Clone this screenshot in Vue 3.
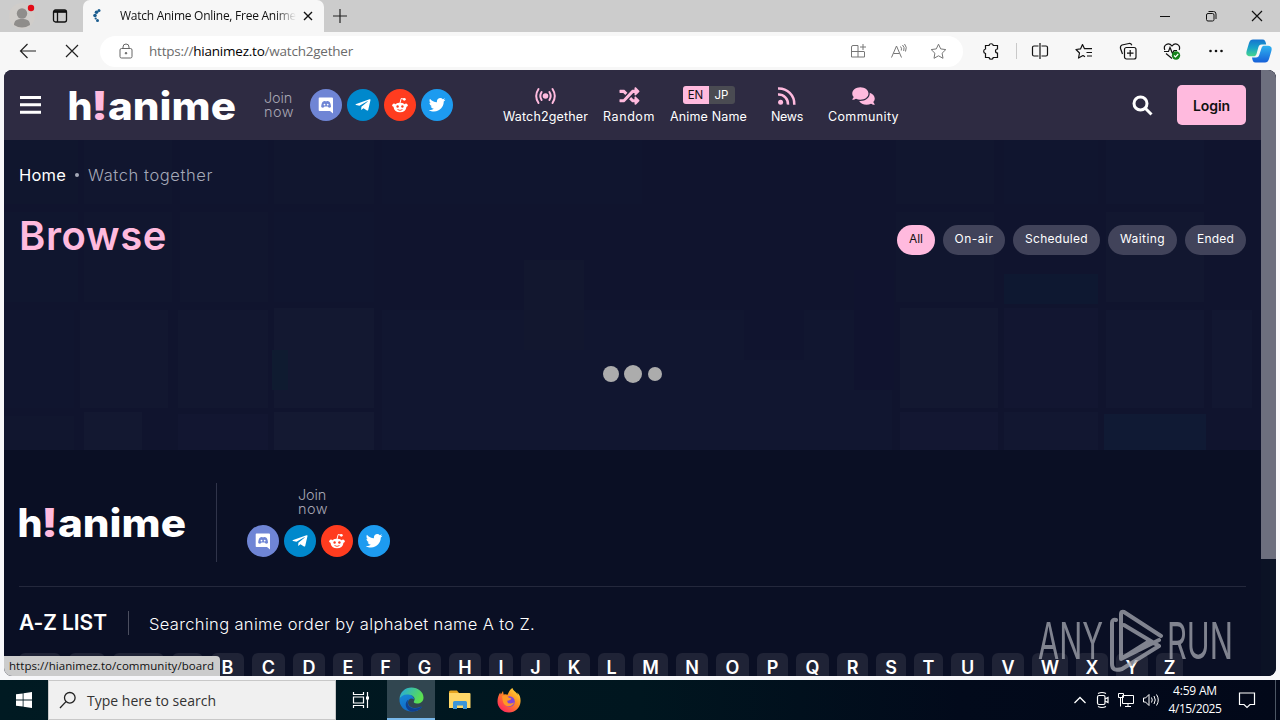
<script setup>
import { h } from 'vue'

// Spreads a label over a set width by adjusting its tracking.
const vFit = {
  mounted(el, { value }) {
    el.style.letterSpacing = '0px'
    const range = document.createRange()
    range.selectNodeContents(el)
    const natural = range.getBoundingClientRect().width
    el.style.letterSpacing = (value - natural) / el.textContent.trim().length + 'px'
  }
}

const Logo = () =>
  h('svg', { width: 168, height: 48, viewBox: '0 -6 168 48', 'font-family': 'Inter, sans-serif', 'font-weight': 800, 'font-size': 39 }, [
    h('text', { x: -1.5, y: 32, textLength: 25, lengthAdjust: 'spacingAndGlyphs', fill: '#fff' }, 'h'),
    h('text', { x: 22, y: 32, textLength: 17, lengthAdjust: 'spacingAndGlyphs', fill: '#ffbade' }, '!'),
    h('text', { x: 39, y: 32, textLength: 128, lengthAdjust: 'spacingAndGlyphs', fill: '#fff' }, 'anime')
  ])

const twitter = 'M459.37 151.716c.325 4.548.325 9.097.325 13.645 0 138.72-105.583 298.558-298.558 298.558-59.452 0-114.68-17.219-161.137-47.106 8.447.974 16.568 1.299 25.34 1.299 49.055 0 94.213-16.568 130.274-44.832-46.132-.975-84.792-31.188-98.112-72.772 6.498.974 12.995 1.624 19.818 1.624 9.421 0 18.843-1.3 27.614-3.573-48.081-9.747-84.143-51.98-84.143-102.985v-1.299c13.969 7.797 30.214 12.67 47.431 13.319-28.264-18.843-46.781-51.005-46.781-87.391 0-19.492 5.197-37.36 14.294-52.954 51.655 63.675 129.3 105.258 216.365 109.807-1.624-7.797-2.599-15.918-2.599-24.04 0-57.828 46.782-104.934 104.934-104.934 30.213 0 57.502 12.67 76.67 33.137 23.715-4.548 46.456-13.32 66.599-25.34-7.798 24.366-24.366 44.833-46.132 57.827 21.117-2.273 41.584-8.122 60.426-16.243-14.292 20.791-32.161 39.308-52.628 54.253z'
const telegram = 'M446.7 98.6l-67.6 318.8c-5.1 22.5-18.4 28.1-37.3 17.5l-103-75.9-49.7 47.8c-5.5 5.5-10.1 10.1-20.7 10.1l7.4-104.9 190.9-172.5c8.3-7.4-1.8-11.5-12.9-4.1L117.8 284 16.2 252.2c-22.1-6.9-22.5-22.1 4.6-32.7L418.2 66.4c18.4-6.9 34.5 4.1 28.5 32.2z'
const shuffle = 'M504.971 359.029c9.373 9.373 9.373 24.569 0 33.941l-80 79.984c-15.01 15.01-40.971 4.49-40.971-16.971V416h-58.785a12.004 12.004 0 0 1-8.773-3.812l-70.556-75.596 53.333-57.143L352 336h32v-39.981c0-21.438 25.943-31.998 40.971-16.971l80 79.981zM12 176h84l52.781 56.551 53.333-57.143-70.556-75.596A11.999 11.999 0 0 0 122.785 96H12c-6.627 0-12 5.373-12 12v56c0 6.627 5.373 12 12 12zm372 0v39.984c0 21.46 25.961 31.98 40.971 16.971l80-79.984c9.373-9.373 9.373-24.569 0-33.941l-80-79.981C409.943 24.021 384 34.582 384 56.019V96h-58.785a12.004 12.004 0 0 0-8.773 3.812L96 336H12c-6.627 0-12 5.373-12 12v56c0 6.627 5.373 12 12 12h110.785c3.326 0 6.503-1.381 8.773-3.812L352 176h32z'
const comments = 'M416 192c0-88.4-93.1-160-208-160S0 103.6 0 192c0 34.3 14.1 65.9 38 92-13.4 30.2-35.5 54.2-35.8 54.5-2.2 2.3-2.8 5.7-1.5 8.7S4.8 352 8 352c36.6 0 66.9-12.3 88.7-25 32.2 15.7 70.3 25 111.3 25 114.9 0 208-71.6 208-160zm122 220c23.9-26 38-57.7 38-92 0-66.9-53.5-124.2-129.3-148.1.9 6.6 1.3 13.3 1.3 20.1 0 105.9-107.7 192-240 192-10.8 0-21.3-.8-31.7-1.9C207.8 439.6 281.8 480 368 480c41 0 79.1-9.2 111.3-25 21.8 12.7 52.1 25 88.7 25 3.2 0 6.1-1.9 7.3-4.8 1.3-2.9.7-6.3-1.5-8.7-.3-.3-22.4-24.2-35.8-54.5z'

const svg32 = (color, kids) =>
  h('svg', { width: 32, height: 32, viewBox: '0 0 32 32' }, [h('circle', { cx: 16, cy: 16, r: 16, fill: color }), ...kids])

const Socials = () => [
  svg32('#6f85d5', [
    h('path', { d: 'M9.500 8.500h12.500q1 0 1 1V24.500l-3-2.500H9.500q-.8 0-.8-.8V9.500q0-1 .8-1z', fill: '#fff' }),
    h('path', { d: 'M11.200 18c0-2.700.8-4.600 1.600-5.300 1-.6 2-.8 2.500-.4h1.600c.5-.4 1.500-.2 2.500.4.8.7 1.600 2.600 1.600 5.300-.9.800-2 .9-2.400.6l-.9-1.200h-3.200l-.9 1.200c-.6.300-1.600.2-2.400-.6z', fill: '#6f85d5' }),
    h('circle', { cx: 14.500, cy: 15.600, r: 0.900, fill: '#fff' }),
    h('circle', { cx: 17.700, cy: 15.600, r: 0.900, fill: '#fff' })
  ]),
  svg32('#0088cc', [h('path', { d: telegram, fill: '#fff', transform: 'translate(8.500 8.200) scale(.0335 .0305)' })]),
  svg32('#ff3c1f', [
    h('ellipse', { cx: 16, cy: 18.500, rx: 6.300, ry: 4.800, fill: '#fff' }),
    h('circle', { cx: 10, cy: 16.200, r: 1.700, fill: '#fff' }),
    h('circle', { cx: 22, cy: 16.200, r: 1.700, fill: '#fff' }),
    h('circle', { cx: 20.300, cy: 10.300, r: 1.400, fill: '#fff' }),
    h('path', { d: 'M16 14l1.200-4.500 3 .7', stroke: '#fff', fill: 'none', 'stroke-width': 1 }),
    h('circle', { cx: 13.600, cy: 17.500, r: 1.200, fill: '#ff3c1f' }),
    h('circle', { cx: 18.400, cy: 17.500, r: 1.200, fill: '#ff3c1f' }),
    h('path', { d: 'M13.500 20.500q2.500 1.800 5 0', stroke: '#ff3c1f', fill: 'none', 'stroke-width': 0.900 })
  ]),
  svg32('#1d9bf0', [h('path', { d: twitter, fill: '#fff', transform: 'translate(7.800 7.500) scale(.0325)' })])
]

const filters = [
  { label: 'All', w: 38, t: 14, on: true },
  { label: 'On-air', w: 62, t: 39 },
  { label: 'Scheduled', w: 87, t: 63 },
  { label: 'Waiting', w: 69, t: 45 },
  { label: 'Ended', w: 61, t: 37 }
]

// Label and tile width; the first four tiles sit under the status bubble.
const letters = [
  ['', 42], ['', 36], ['', 51], ['', 31], ['B', 33], ['C', 33], ['D', 32], ['E', 30], ['F', 29], ['G', 33],
  ['H', 32], ['I', 24], ['J', 29], ['K', 32], ['L', 27], ['M', 35], ['N', 32], ['O', 33], ['P', 31], ['Q', 33],
  ['R', 31], ['S', 30], ['T', 29], ['U', 33], ['V', 32], ['W', 36], ['X', 32], ['Y', 32], ['Z', 27]
]

// Faint poster wall behind the main section: x, y, width, height, fill
const posters = [
  [0, 0, 74, 64, '#10162e'], [80, 0, 88, 64, '#11162f'], [176, 0, 88, 64, '#10152f'], [270, 0, 100, 64, '#11162f'],
  [378, 0, 260, 64, '#10152f'], [892, 0, 98, 64, '#11162f'], [1000, 0, 94, 64, '#10152f'], [1102, 0, 98, 64, '#111630'],
  [0, 72, 74, 90, '#10162f'], [80, 72, 88, 90, '#11162f'], [176, 72, 88, 90, '#11162f'], [270, 72, 100, 90, '#10152f'],
  [892, 72, 98, 90, '#11162f'], [1000, 134, 94, 30, '#0e1831'], [1102, 72, 98, 90, '#121730'],
  [0, 170, 70, 98, '#10152f'], [76, 170, 88, 98, '#121730'], [174, 170, 90, 98, '#121730'], [270, 168, 100, 100, '#131831'],
  [378, 170, 510, 140, '#111630'], [896, 168, 98, 100, '#131831'], [1000, 168, 94, 100, '#121631'], [1102, 170, 98, 98, '#121731'], [1208, 170, 40, 98, '#121731'],
  [0, 276, 70, 34, '#11162f'], [80, 272, 58, 38, '#131831'], [174, 274, 90, 36, '#121631'], [270, 272, 100, 38, '#141932'],
  [896, 272, 98, 38, '#131732'], [1000, 272, 94, 38, '#121731'], [1100, 274, 102, 36, '#101a34'],
  [268, 210, 16, 40, '#0f1b30'], [740, 170, 60, 50, '#10142f'], [850, 130, 40, 120, '#10132f'], [520, 120, 60, 90, '#12172f']
]
</script>

<template>
  <div class="screen">
    <div class="tabbar">
      <svg class="profile" width="30" height="28" viewBox="0 0 30 28"><circle cx="15" cy="14" r="13" fill="#d0cdca"/><circle cx="15" cy="11.500" r="5.200" fill="#8f8d8b"/><path d="M7 23c0-4.500 3-6 8-6s8 1.500 8 6q-8 5-16 0z" fill="#8f8d8b"/><circle cx="24" cy="6" r="3.200" fill="#e30b17"/></svg>
      <svg class="workspaces" width="16" height="16" viewBox="0 0 16 16" fill="none" stroke="#111" stroke-width="1.300"><rect x="1.500" y="2" width="13" height="12" rx="2"/><path d="M1.500 4h13M5.500 4v10" /><path d="M2 3.300h12" stroke-width="2"/></svg>
      <div class="tab">
        <svg width="12" height="18" viewBox="0 0 12 18" fill="#1b5d8f"><circle cx="7" cy="3.500" r="1.500"/><circle cx="4.500" cy="5.200" r="1.800"/><circle cx="3" cy="8.500" r="1.800"/><circle cx="5.500" cy="13.500" r="1.500"/><circle cx="3.700" cy="11.500" r="1.100"/></svg>
        <div class="tab-title"><span v-fit="176">Watch Anime Online, Free Anime</span></div>
        <svg width="10" height="10" viewBox="0 0 10 10" stroke="#111" stroke-width="1.400"><path d="M1 1l8 8M9 1l-8 8"/></svg>
      </div>
      <svg class="newtab" width="16" height="16" viewBox="0 0 16 16" stroke="#222" stroke-width="1.200"><path d="M8 1v14M1 8h14"/></svg>
      <div class="winbtns">
        <svg width="12" height="12" viewBox="0 0 12 12" stroke="#111"><path d="M1 6.500h10"/></svg>
        <svg width="12" height="12" viewBox="0 0 12 12" fill="none" stroke="#111"><rect x="1.500" y="3.500" width="7.500" height="7.500" rx="1.500"/><path d="M3.500 1.500h5a2.500 2.500 0 0 1 2.500 2.500v5"/></svg>
        <svg width="12" height="12" viewBox="0 0 12 12" stroke="#111" stroke-width="1.200"><path d="M1 1l10 10M11 1L1 11"/></svg>
      </div>
    </div>

    <div class="toolbar">
      <div class="cell back"><svg width="18" height="16" viewBox="0 0 18 16" fill="none" stroke="#222" stroke-width="1.200"><path d="M17 8H1.500M8.500 1L1.500 8l7 7"/></svg></div>
      <div class="cell stop"><svg width="14" height="14" viewBox="0 0 14 14" stroke="#222" stroke-width="1.200"><path d="M1 1l12 12M13 1L1 13"/></svg></div>
      <div class="address">
        <svg class="lock" width="14" height="16" viewBox="0 0 14 16" fill="none" stroke="#666"><rect x="1" y="5.500" width="12" height="9.500" rx="1.500"/><path d="M4 5.500V4a3 3 0 0 1 6 0v1.500"/><circle cx="7" cy="10.200" r=".8" fill="#666"/></svg>
        <span v-fit="204" class="url">https://<b>hianimez.to</b>/watch2gether</span>
        <div class="addr-icons">
          <svg width="18" height="16" viewBox="0 0 18 16" fill="none" stroke="#777"><path d="M8 2.500H3A1.500 1.500 0 0 0 1.500 4v10h13V9M8 2.500V14M1.500 8.500h13M13 1v6M10 4h6"/></svg>
          <svg width="18" height="16" viewBox="0 0 18 16" fill="none" stroke="#777"><path d="M1.500 14.500L6.500 3l5 11.500M3.500 10.500h6M10.500 3.500q1.500 1.500.8 4M12.500 2q2.500 2 1.200 6M14.500 1q3 3 1 7.500"/></svg>
          <svg width="17" height="17" viewBox="0 0 17 17" fill="none" stroke="#777" stroke-linejoin="round"><path d="M8.500 1.200l2.200 4.700 5.100.7-3.700 3.600.9 5.100-4.500-2.500L4 15.300l.9-5.100L1.200 6.600l5.100-.7z"/></svg>
        </div>
      </div>
      <div class="cell ext"><svg width="18" height="18" viewBox="0 0 18 18" fill="none" stroke="#111" stroke-width="1.200"><path d="M3.500 3.500H7a2.200 2.200 0 0 1 4.300 0h4.200V7a2 2 0 0 0 0 4v4.500h-4.200a2.200 2.200 0 0 1-4.300 0H3.500v-4a2.300 2.300 0 0 1 0-4.500z"/></svg></div>
      <div class="sep"></div>
      <div class="cell"><svg width="18" height="16" viewBox="0 0 18 16" fill="none" stroke="#111" stroke-width="1.200"><path d="M7.500 3H3A1.500 1.500 0 0 0 1.500 4.500v7A1.500 1.500 0 0 0 3 13h4.500M10.500 3H15a1.500 1.500 0 0 1 1.500 1.500v7A1.500 1.500 0 0 1 15 13h-4.500M9 0v16"/></svg></div>
      <div class="cell"><svg width="18" height="16" viewBox="0 0 18 16" fill="none" stroke="#111" stroke-width="1.200" stroke-linejoin="round"><path d="M10 13.800l-2-1.300-4.500 2.500 1-5L1 6.500l4.500-.6L7.500 1.500l2 4.200h7.500M11.500 9.500h5.500M12 13h5"/></svg></div>
      <div class="cell"><svg width="18" height="18" viewBox="0 0 18 18" fill="none" stroke="#111" stroke-width="1.200"><rect x="5.500" y="5.500" width="11.500" height="11.500" rx="2"/><path d="M11.200 8v6.500M8 11.200h6.500M3.500 12L1.500 6.500Q1 4 3 3l7-1.500q2-.3 2.800 1.800"/></svg></div>
      <div class="cell"><svg width="18" height="18" viewBox="0 0 18 18" fill="none" stroke="#111" stroke-width="1.200"><path d="M1.800 8C-.2 3 5.500-.5 9 4c3.500-4.500 9-1 7.200 4M1 9.500h4.500l1.500-4 2.500 6 1.500-3h3M3 11.500l6 5"/><circle cx="13" cy="13.500" r="4.200" fill="#16821c" stroke="none"/><path d="M11 13.500l1.500 1.500 2.700-3" stroke="#fff"/></svg></div>
      <div class="cell"><svg width="16" height="4" viewBox="0 0 16 4" fill="#111"><circle cx="2.500" cy="2" r="1.300"/><circle cx="8" cy="2" r="1.300"/><circle cx="13.500" cy="2" r="1.300"/></svg></div>
      <div class="cell copilot"><svg width="26" height="24" viewBox="0 0 26 24">
        <defs><linearGradient id="ca" x1="0" y1="0" x2="0" y2="1"><stop offset="0" stop-color="#1674cf"/><stop offset=".5" stop-color="#19a3c9"/><stop offset="1" stop-color="#47d68b"/></linearGradient><linearGradient id="cb" x1="0" y1="0" x2="0" y2="1"><stop offset="0" stop-color="#2fb4f0"/><stop offset="1" stop-color="#1660d8"/></linearGradient></defs>
        <path d="M7 .5h9.500c2.500 0 3.200 2 3.700 5h-4.500c-2 0-2.800 1-3.400 3L10.500 15c-.5 1.700-1.500 2.300-3 2.300H4c-3.300 0-4.300-2.300-3.300-5.500L3 4C3.800 1.500 5 .5 7 .5z" fill="url(#ca)"/>
        <path d="M19 23.500H9.500c-2.300 0-3-2-3.500-5h4c2 0 2.800-1 3.400-3L15.500 9c.5-1.700 1.500-2.300 3-2.300H22c3.300 0 4.300 2.300 3.300 5.500L23 20c-.8 2.500-2 3.500-4 3.500z" fill="url(#cb)"/></svg></div>
    </div>

    <div class="frame">
      <div class="page">
        <header class="header">
          <svg class="menu" width="21" height="18" viewBox="0 0 21 18" fill="#fff"><path d="M0 0h21v3H0zM0 7.300h21v3H0zM0 14.700h21v3H0z"/></svg>
          <div class="logo"><Logo /></div>
          <div class="join"><span v-fit="28">Join</span><span v-fit="30">now</span></div>
          <div class="socials"><Socials /></div>
          <nav class="nav">
            <div class="item w2g"><div class="ico"><svg width="21" height="18" viewBox="0 0 21 18" fill="none" stroke="#ffbade" stroke-width="2" stroke-linecap="round"><circle cx="10.500" cy="9" r="2.800" fill="#ffbade" stroke="none"/><path d="M6.600 5q-2.600 4 0 8M14.400 5q2.600 4 0 8M3.500 2q-4.600 7 0 14M17.500 2q4.600 7 0 14"/></svg></div><span v-fit="85">Watch2gether</span></div>
            <div class="item rnd"><div class="ico"><svg width="21" height="20" viewBox="0 0 512 512" fill="#ffbade"><path :d="shuffle"/></svg></div><span v-fit="52">Random</span></div>
            <div class="item name"><div class="ico"><div class="lang"><i class="en">EN</i><i>JP</i></div></div><span v-fit="77">Anime Name</span></div>
            <div class="item news"><div class="ico"><svg width="18" height="18" viewBox="0 0 18 18" fill="none" stroke="#ffbade" stroke-width="2.500"><circle cx="2.600" cy="15.200" r="2.500" fill="#ffbade" stroke="none"/><path d="M0 7.500A9.500 9.500 0 0 1 10 17.700M0 1.500A15.500 15.500 0 0 1 16.300 17.700"/></svg></div><span v-fit="32">News</span></div>
            <div class="item com"><div class="ico"><svg width="23" height="20" viewBox="0 0 576 512" fill="#ffbade"><path :d="comments"/></svg></div><span v-fit="71">Community</span></div>
          </nav>
          <svg class="search" width="21" height="21" viewBox="0 0 21 21" fill="none" stroke="#fff" stroke-width="3"><circle cx="8.500" cy="8.500" r="6.500"/><path d="M13 13l6.500 6.500"/></svg>
          <div class="login"><span v-fit="37">Login</span></div>
        </header>

        <main class="main">
          <svg class="wall" width="1257" height="310" viewBox="0 0 1257 310"><rect v-for="(p, i) in posters" :key="i" :x="p[0]" :y="p[1]" :width="p[2]" :height="p[3]" :fill="p[4]"/></svg>
          <div class="crumbs"><span v-fit="47" class="home">Home</span><i class="bullet"></i><span v-fit="125" class="here">Watch together</span></div>
          <div class="titlebar">
            <h1><span v-fit="148">Browse</span></h1>
            <div class="filters">
              <div v-for="f in filters" :key="f.label" class="pill" :class="{ on: f.on }" :style="{ width: f.w + 'px' }"><span v-fit="f.t">{{ f.label }}</span></div>
            </div>
          </div>
          <div class="loading"><i class="d1"></i><i class="d2"></i><i class="d3"></i></div>
        </main>

        <footer class="footer">
          <div class="foot-top">
            <div class="foot-logo"><Logo /></div>
            <div class="foot-join">
              <div class="join"><span v-fit="28">Join</span><span v-fit="30">now</span></div>
              <div class="socials"><Socials /></div>
            </div>
          </div>
          <div class="az-head"><div class="az-title"><span v-fit="88">A-Z LIST</span></div><span v-fit="386" class="az-text">Searching anime order by alphabet name A to Z.</span></div>
          <div class="az"><div v-for="(l, i) in letters" :key="i" class="letter" :style="{ width: l[1] + 'px' }">{{ l[0] }}</div></div>
        </footer>
      </div>
      <div class="scroll"><div class="thumb"></div></div>
    </div>

    <div class="status"><span v-fit="205">https://hianimez.to/community/board</span></div>

    <svg class="watermark" width="194" height="64" viewBox="0 0 194 64">
      <g fill="#a6a8b1" font-family="Inter, sans-serif" font-size="51" font-weight="400">
        <text x="0" y="50" textLength="65" lengthAdjust="spacingAndGlyphs">ANY</text>
        <text x="129" y="50" textLength="66" lengthAdjust="spacingAndGlyphs">RUN</text>
      </g>
      <g fill="none" stroke="#a6a8b1" stroke-width="4" stroke-linecap="round" stroke-linejoin="round">
        <path d="M123 27L86 3q-3-1-3 2v45l38-19M86 16l35 21M121 37L84 60q-10 3-10-5V14q0-4 4-3M86 48l24-15"/>
      </g>
    </svg>

    <div class="taskbar">
      <div class="start"><svg width="16" height="16" viewBox="0 0 16 16" fill="#fff"><path d="M0 2.300L6.700 1.400v6.200H0zM7.500 1.300L16 0v7.600H7.500zM0 8.400h6.700v6.200L0 13.700zM7.500 8.400H16V16l-8.500-1.300z"/></svg></div>
      <div class="tsearch"><svg width="18" height="18" viewBox="0 0 18 18" fill="none" stroke="#222" stroke-width="1.300"><circle cx="10.800" cy="6.800" r="5.300"/><path d="M7 10.600L1 17"/></svg><span v-fit="129">Type here to search</span></div>
      <div class="tcell"><svg width="18" height="18" viewBox="0 0 18 18" fill="none" stroke="#fff" stroke-width="1.200"><path d="M1.500 1v2.500h10V1M1.500 17v-2.500h10V17M1.500 6h10v6h-10zM15.500 1v16"/><path d="M14 5.500h3v3h-3z" fill="#fff" stroke="none"/></svg></div>
      <div class="tcell active"><svg width="25" height="25" viewBox="0 0 25 25">
        <defs><linearGradient id="ea" x1="0" y1="0" x2="1" y2=".4"><stop offset="0" stop-color="#22a6e8"/><stop offset="1" stop-color="#5be04f"/></linearGradient><linearGradient id="eb" x1="0" y1="0" x2=".5" y2="1"><stop offset="0" stop-color="#1689d8"/><stop offset="1" stop-color="#1168c4"/></linearGradient></defs>
        <path d="M.5 12C1 5 6 .5 12.500.5 19 .5 24.500 5 24.500 10.500c0 4-3 6-6.500 6-2.500 0-4-1-3-2.200C17 11 14 8 10 8c-5 0-8 2-9.500 4z" fill="url(#ea)"/><path d="M.5 12C2 9 5 7 9.500 7.500c3.500.3 5.500 2.500 5.500 5-3-2.500-6 0-6 3 0 5 6.500 7 12 4.500 1.500-.6 2 0 1 1C20 23.500 17 24.500 12.500 24.500 5.500 24.500 0 19 .5 12z" fill="url(#eb)"/><path d="M9.500 12.500C7 17 10.500 21.500 16 21.500c2.500 0 4.500-1 5.500-1.500.8-.4 1.200.2.6 1C20 23.500 16 24.800 12.500 24.500 6 23 5 15 9.500 12.500z" fill="#10408f"/></svg></div>
      <div class="tcell"><svg width="22" height="20" viewBox="0 0 22 20"><path d="M0 2q0-1.500 1.500-1.500H8l2 2.500H0z" fill="#e5a520"/><path d="M0 3h20.500q1 0 1 1v14H0z" fill="#ffd767"/><path d="M4 18v-5.500Q4 11 5.500 11h11q1.500 0 1.500 1.500V19h-4v-3.500H8V19H4z" fill="#3d95d8"/></svg></div>
      <div class="tcell"><svg width="24" height="25" viewBox="0 0 24 25">
        <defs><linearGradient id="fx" x1="1" y1="0" x2=".2" y2="1"><stop offset="0" stop-color="#fff044"/><stop offset=".45" stop-color="#ff9020"/><stop offset="1" stop-color="#ff2060"/></linearGradient></defs>
        <path d="M15.500 0c.5 3 4.500 4 5 7 0-1 0-1.500-.3-2.500C23 7 23.800 10 23.500 14c-.6 6-5.500 10.500-11.500 10.500C5.500 24.500.5 19.500.5 13.500.5 10 1.500 7 3.200 4.500l.6 2L6 3l.6 3.500q2-.8 4 .2C11.500 4 13 1.500 15.500 0z" fill="url(#fx)"/><circle cx="12.500" cy="13.500" r="5.300" fill="#8145d9"/><path d="M5 8c3-1.500 5-.5 6.500 1.500l3 1q-1 2-4 2c-1 3 3 4 6.500 2-1 4-7 5.500-10 1.500C5.500 14 5.500 10.500 5 8z" fill="#ff9826"/></svg></div>
      <div class="tray">
        <svg width="14" height="10" viewBox="0 0 14 10" fill="none" stroke="#fff" stroke-width="1.300"><path d="M1.500 8L7 2.500 12.500 8"/></svg>
        <svg width="16" height="18" viewBox="0 0 16 18" fill="none" stroke="#fff" stroke-width="1.200"><rect x="3.500" y="4.500" width="7.500" height="9" rx="1.500"/><path d="M11 8l3-1.500v5L11 10M4 2.500q4-2 8 0M4 15.500q4 2 8 0"/></svg>
        <svg width="18" height="16" viewBox="0 0 18 16" fill="none" stroke="#fff"><path d="M5.500 3.500h11v8h-11zM8 14.500h6M11 11.500v3M1.500 1.500h5v4h-5zM3.500 5.500v9"/></svg>
        <svg width="18" height="16" viewBox="0 0 18 16" fill="none" stroke="#fff"><path d="M1.500 6h2L7 2.500v11L3.500 10h-2zM9.500 5.500q1.500 2.500 0 5M12 4q2.500 4 0 8M14.500 2.500q3.500 5.500 0 11"/></svg>
      </div>
      <div class="clock"><span v-fit="44">4:59 AM</span><span v-fit="53">4/15/2025</span></div>
      <svg class="notif" width="18" height="18" viewBox="0 0 18 18" fill="none" stroke="#fff" stroke-width="1.200"><path d="M1.500 2h15v11.500h-4.500L9 16.500l-3-3H1.500z"/></svg>
      <div class="peek"></div>
    </div>
  </div>
</template>

<style>
body { margin: 0; overflow: hidden; }
</style>

<style scoped>
.screen { position: relative; width: 1280px; height: 720px; overflow: hidden; background: #f7f7f9; display: flex; flex-direction: column; font-family: "Open Sans", "Noto Sans", sans-serif; box-sizing: border-box; }
.screen svg { display: block; flex: none; overflow: visible; }
span { white-space: nowrap; }
i { font-style: normal; }

.tabbar { height: 32px; background: #ccc; display: flex; align-items: center; flex: none; }
.profile { margin-left: 7px; }
.workspaces { margin-left: 15px; }
.tab { margin-left: 15px; width: 241px; height: 32px; background: #f7f7f7; border-radius: 7px 7px 0 0; display: flex; align-items: center; box-sizing: border-box; padding-left: 9px; }
.tab-title { margin-left: 16px; width: 176px; margin-right: 7px; overflow: hidden; font-size: 12px; line-height: 18px; color: #111; -webkit-mask-image: linear-gradient(90deg, #000 88%, transparent); mask-image: linear-gradient(90deg, #000 88%, transparent); }
.newtab { margin-left: 8px; }
.winbtns { margin-left: auto; margin-right: 17px; display: flex; gap: 34px; }

.toolbar { height: 38px; flex: none; display: flex; align-items: center; background: #f7f7f7; }
.cell { width: 44px; display: flex; justify-content: center; }
.back { margin-left: 6px; }
.address { margin-left: 6px; width: 863px; height: 31px; border-radius: 16px; background: #fff; display: flex; align-items: center; box-sizing: border-box; padding: 0 16px 0 19px; }
.url { margin-left: 16px; font-size: 13.500px; color: #6b6b6b; line-height: 20px; }
.url b { font-weight: 400; color: #000; }
.addr-icons { margin-left: auto; display: flex; align-items: center; gap: 22px; }
.ext { margin-left: 6px; }
.sep { width: 1px; height: 16px; background: #c9c9c9; margin: 0 1px 0 3px; }
.copilot { width: 41px; }

.frame { margin-left: 4px; width: 1272px; height: 606px; flex: none; border-radius: 8px; overflow: hidden; display: flex; background: #0a0f24; font-family: Inter, sans-serif; }
.page { width: 1257px; height: 606px; overflow: hidden; }
.scroll { width: 15px; background: #0b1225; }
.thumb { height: 489px; background: #6d6f7e; }

.header { height: 70px; background: #2e2b42; display: flex; align-items: center; }
.menu { margin-left: 16px; }
.logo { margin-left: 28px; width: 168px; height: 48px; margin-top: 2px; }
.join { display: flex; flex-direction: column; font-size: 14.500px; line-height: 14px; font-weight: 300; color: #a6a5b2; width: 32px; }
.header .join { margin-left: 27px; }
.socials { display: flex; gap: 5px; }
.header .socials { margin-left: 14px; }
.nav { display: flex; margin-left: 50px; margin-top: -3px; }
.item { display: flex; flex-direction: column; align-items: center; font-size: 12.500px; color: #fff; line-height: 16px; }
.ico { height: 26px; display: flex; align-items: center; }
.rnd { margin-left: 15px; }
.name { margin-left: 15px; }
.news { margin-left: 24px; }
.com { margin-left: 25px; }
.lang { display: flex; width: 52px; height: 18px; border-radius: 3px; overflow: hidden; background: #4a4b52; font-size: 11.500px; line-height: 18px; text-align: center; margin-top: -1px; }
.lang i { flex: 1; }
.lang .en { background: #ffbade; color: #111; }
.search { margin-left: auto; }
.login { margin: 0 15px 0 24px; width: 69px; height: 40px; border-radius: 5px; background: #ffbade; color: #111; font-size: 14px; font-weight: 600; display: flex; align-items: center; justify-content: center; padding-top: 1px; box-sizing: border-box; }

.main { position: relative; height: 310px; background: #10142e; box-sizing: border-box; padding: 23px 15px 0; }
.wall { position: absolute; left: 0; top: 0; }
.crumbs { position: relative; display: flex; align-items: center; height: 24px; font-size: 16.500px; color: #fff; }
.home { font-weight: 400; }
.here { font-weight: 300; color: #a5a9b8; }
.bullet { width: 4px; height: 4px; border-radius: 2px; background: #a5a9b8; margin: 0 9px; }
.titlebar { position: relative; display: flex; align-items: center; justify-content: space-between; height: 50px; margin-top: 24px; }
h1 { margin: 0; font-size: 40px; font-weight: 600; line-height: 50px; color: #ffbade; }
.filters { display: flex; gap: 8px; margin-top: 8px; }
.pill { height: 30px; border-radius: 15px; background: #41435a; color: #fff; font-size: 12px; line-height: 28px; display: flex; justify-content: center; }
.pill.on { background: #ffbade; color: #111; }
.loading { position: relative; display: flex; align-items: center; justify-content: center; gap: 5px; height: 20px; margin-top: 103px; }
.loading i { border-radius: 50%; background: #acacac; }
.loading .d1 { width: 16px; height: 16px; }
.loading .d2 { width: 18px; height: 18px; }
.loading .d3 { width: 14px; height: 14px; margin-left: 1px; }

.footer { padding: 33px 15px 0; }
.foot-top { display: flex; height: 103px; border-bottom: 1px solid #24283c; }
.foot-logo { width: 197px; height: 79px; border-right: 1px solid #30344a; display: flex; align-items: center; }
.foot-join { margin-left: 30px; padding-top: 5px; display: flex; flex-direction: column; gap: 9px; }
.foot-join .join { margin-left: 51px; }
.az-head { display: flex; align-items: center; margin-top: 24px; height: 24px; color: #fff; }
.az-title { font-size: 21px; font-weight: 600; line-height: 24px; width: 109px; border-right: 1px solid #4b4e5f; }
.az-text { margin-left: 20px; font-size: 16.500px; font-weight: 300; padding-top: 2px; }
.az { display: flex; gap: 8px; margin-top: 18px; }
.letter { flex: none; height: 30px; border-radius: 6px; background: #1f2336; color: #fff; font-size: 18px; font-weight: 600; line-height: 30px; text-align: center; }

.status { position: absolute; left: 4px; top: 656px; width: 216px; height: 20px; box-sizing: border-box; padding-left: 5px; background: #ccc; border-radius: 0 4px 0 8px; font-size: 11.500px; line-height: 19px; color: #111; }
.watermark { position: absolute; left: 1038px; top: 609px; opacity: .76; }

.taskbar { margin-top: 4px; height: 40px; flex: none; display: flex; align-items: center; background: linear-gradient(90deg, #001a22, #00161f 50%, #020a1b 75%, #020819); }
.start { width: 48px; display: flex; justify-content: center; }
.tsearch { width: 288px; height: 40px; box-sizing: border-box; border: 1px solid #c8c8c8; background: #f0f0f0; display: flex; align-items: center; gap: 10px; padding-left: 10px; font-size: 14px; color: #333; }
.tcell { width: 49px; height: 40px; display: flex; align-items: center; justify-content: center; }
.tcell.active { width: 48px; margin-left: 2px; background: #314650; border-bottom: 2px solid #78b8ea; box-sizing: border-box; }
.tray { margin-left: auto; display: flex; align-items: center; gap: 7px; }
.clock { margin-left: 8px; width: 54px; display: flex; flex-direction: column; align-items: center; color: #fff; font-size: 12px; line-height: 18px; }
.notif { margin-left: 16px; }
.peek { margin-left: 19px; width: 1px; height: 40px; background: #4c5664; margin-right: 4px; }
</style>
